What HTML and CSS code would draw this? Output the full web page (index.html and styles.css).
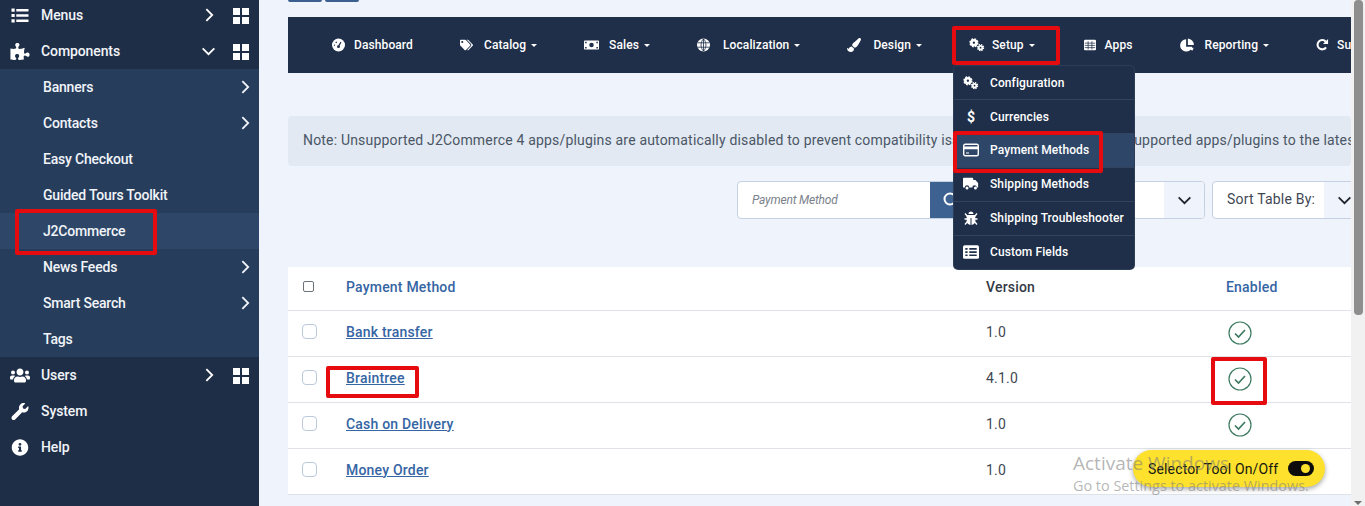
FILE: index.html
```html
<!DOCTYPE html>
<html lang="en">
<head>
    <meta charset="UTF-8">
    <meta name="viewport" content="width=device-width, initial-scale=1.0">
    <title>Payment Methods</title>
    <link rel="stylesheet" href="styles.css">
</head>
<body>
    <svg class="defs" width="0" height="0">
        <symbol id="i-grid" viewBox="0 0 16 16"><path fill="currentColor" d="M0 0h7v7H0zM9 0h7v7H9zM0 9h7v7H0zM9 9h7v7H9z"/></symbol>
        <symbol id="i-right" viewBox="0 0 10 16"><path fill="none" stroke="currentColor" stroke-width="2" d="M1.5 1.5 8 8l-6.500 6.500"/></symbol>
        <symbol id="i-down" viewBox="0 0 16 10"><path fill="none" stroke="currentColor" stroke-width="2" d="M1.500 1.500 8 8l6.500-6.500"/></symbol>
        <symbol id="i-list" viewBox="0 0 512 512"><path fill="currentColor" d="M0 48h96v96H0zM0 208h96v96H0zM0 368h96v96H0zM144 60h368v72H144zM144 220h368v72H144zM144 380h368v72H144z"/></symbol>
        <symbol id="i-puzzle" viewBox="0 0 576 512"><path fill="currentColor" d="M519.442 288.651c-41.519 0-59.5 31.593-82.058 31.593C377.409 320.244 432 144 432 144s-196.288 80-196.288-3.297c0-35.827 36.288-46.25 36.288-85.985C272 19.216 243.885 0 210.539 0c-34.654 0-66.366 18.891-66.366 56.346 0 41.364 31.711 59.277 31.711 81.75C175.885 207.719 0 166.758 0 166.758v333.237s178.635 41.047 178.635-28.662c0-22.473-40-40.107-40-81.471 0-37.456 29.25-56.346 63.577-56.346 33.673 0 61.788 19.216 61.788 54.717 0 39.735-36.288 50.158-36.288 85.985 0 60.803 129.675 25.73 181.23 25.73 0 0-34.725-120.101 25.827-120.101 35.962 0 46.423 36.152 86.308 36.152C556.712 416 576 387.99 576 354.443c0-34.199-18.962-65.792-56.558-65.792z"/></symbol>
        <symbol id="i-users" viewBox="0 0 640 512"><path fill="currentColor" d="M96 224c35.3 0 64-28.7 64-64s-28.7-64-64-64-64 28.7-64 64 28.7 64 64 64zm448 0c35.3 0 64-28.7 64-64s-28.7-64-64-64-64 28.7-64 64 28.7 64 64 64zm32 32h-64c-17.6 0-33.5 7.1-45.1 18.6 40.3 22.1 68.9 62 75.1 109.4h66c17.7 0 32-14.3 32-32v-32c0-35.3-28.7-64-64-64zm-256 0c61.9 0 112-50.1 112-112S381.9 32 320 32 208 82.1 208 144s50.1 112 112 112zm76.8 32h-8.3c-20.8 10-43.9 16-68.5 16s-47.6-6-68.5-16h-8.3C179.6 288 128 339.6 128 403.2V432c0 26.5 21.5 48 48 48h288c26.5 0 48-21.5 48-48v-28.8c0-63.6-51.6-115.2-115.2-115.2zm-223.7-13.4C161.5 263.1 145.6 256 128 256H64c-35.3 0-64 28.7-64 64v32c0 17.7 14.3 32 32 32h65.9c6.3-47.4 34.9-87.3 75.2-109.4z"/></symbol>
        <symbol id="i-wrench" viewBox="0 0 512 512"><path fill="currentColor" d="M507.73 109.1c-2.24-9.03-13.54-12.09-20.12-5.51l-74.36 74.36-67.88-11.31-11.31-67.88 74.36-74.36c6.62-6.62 3.43-17.9-5.66-20.16-47.38-11.74-99.55.91-136.58 37.93-39.64 39.64-50.55 97.1-34.05 147.2L18.74 402.76c-24.99 24.99-24.99 65.51 0 90.5 24.99 24.99 65.51 24.99 90.5 0l213.21-213.21c50.12 16.71 107.47 5.68 147.37-34.22 37.07-37.07 49.7-89.32 37.91-136.73z"/></symbol>
        <symbol id="i-info" viewBox="0 0 512 512"><path fill="currentColor" d="M256 8C119.043 8 8 119.083 8 256c0 136.997 111.043 248 248 248s248-111.003 248-248C504 119.083 392.957 8 256 8zm0 110c23.196 0 42 18.804 42 42s-18.804 42-42 42-42-18.804-42-42 18.804-42 42-42zm56 254c0 6.627-5.373 12-12 12h-88c-6.627 0-12-5.373-12-12v-24c0-6.627 5.373-12 12-12h12v-64h-12c-6.627 0-12-5.373-12-12v-24c0-6.627 5.373-12 12-12h64c6.627 0 12 5.373 12 12v100h12c6.627 0 12 5.373 12 12v24z"/></symbol>
        <symbol id="i-tacho" viewBox="0 0 16 16"><circle cx="8" cy="8" r="8" fill="currentColor"/><path fill="none" stroke="#1f2f49" stroke-width="1.500" d="M8 9.500 11 4.500"/><circle cx="8" cy="10" r="1.800" fill="#1f2f49"/><path fill="none" stroke="#1f2f49" stroke-width="1.400" stroke-dasharray="1.500 2.500" d="M3 9a5 5 0 0 1 5-5"/></symbol>
        <symbol id="i-tags" viewBox="0 0 640 512"><path fill="currentColor" d="M497.941 225.941L286.059 14.059A48 48 0 0 0 252.118 0H48C21.49 0 0 21.49 0 48v204.118a48 48 0 0 0 14.059 33.941l211.882 211.882c18.744 18.745 49.136 18.746 67.882 0l204.118-204.118c18.745-18.745 18.745-49.137 0-67.882zM112 160c-26.51 0-48-21.49-48-48s21.49-48 48-48 48 21.49 48 48-21.49 48-48 48zm513.941 133.823L421.823 497.941c-18.745 18.745-49.137 18.745-67.882 0l-.36-.36L527.64 323.522c16.999-16.999 26.36-39.6 26.36-63.64s-9.362-46.641-26.36-63.64L331.397 0h48.721a48 48 0 0 1 33.941 14.059l211.882 211.882c18.745 18.745 18.745 49.137 0 67.882z"/></symbol>
        <symbol id="i-money" viewBox="0 0 20 14"><rect y="1" width="20" height="12" rx="1" fill="currentColor"/><circle cx="10" cy="7" r="3" fill="#1f2f49"/><path fill="#1f2f49" d="M1.500 2.500h2v2h-2zM16.500 2.500h2v2h-2zM1.500 9.500h2v2h-2zM16.500 9.500h2v2h-2z"/></symbol>
        <symbol id="i-globe" viewBox="0 0 16 16"><circle cx="8" cy="8" r="8" fill="currentColor"/><path fill="none" stroke="#1f2f49" d="M.5 5.300h15M.5 10.700h15M8 .5v15M8 .5C4 4 4 12 8 15.500M8 .5c4 3.500 4 11.500 0 15"/></symbol>
        <symbol id="i-brush" viewBox="0 0 512 512"><path fill="currentColor" d="M167.02 309.34c-40.12 2.58-76.53 17.86-97.19 72.3-2.35 6.21-8 9.98-14.59 9.98-11.11 0-45.46-27.67-55.25-34.35C0 439.62 37.93 512 128 512c75.86 0 128-43.77 128-120.19 0-3.11-.65-6.08-.97-9.13l-88.01-73.34zM457.89 0c-15.16 0-29.37 6.71-40.21 16.45C213.27 199.05 192 203.34 192 257.09c0 13.7 3.25 26.76 8.73 38.7l63.82 53.18c7.21 1.8 14.64 3.03 22.39 3.03 62.11 0 98.11-45.47 211.16-256.46 7.38-14.35 13.9-29.85 13.900-45.99C512 20.64 486 0 457.89 0z"/></symbol>
        <symbol id="i-cogs" viewBox="0 0 18 15">
            <circle cx="5.500" cy="5" r="2.800" fill="none" stroke="currentColor" stroke-width="3"/>
            <circle cx="5.500" cy="5" r="4.400" fill="none" stroke="currentColor" stroke-width="1.600" stroke-dasharray="2 1.460"/>
            <circle cx="13" cy="10.500" r="2" fill="none" stroke="currentColor" stroke-width="2"/>
            <circle cx="13" cy="10.500" r="3.400" fill="none" stroke="currentColor" stroke-width="1.400" stroke-dasharray="1.600 1.070"/>
        </symbol>
        <symbol id="i-th" viewBox="0 0 16 14"><rect width="16" height="14" rx="1.500" fill="currentColor"/><path fill="none" stroke="#1f2f49" d="M1 4.500h14M1 7.500h14M1 10.500h14M5.500 2v11M10.500 2v11"/></symbol>
        <symbol id="i-pie" viewBox="0 0 16 16"><path fill="currentColor" d="M7 1.500a7 7 0 1 0 7 8.500H7zM9 .5v7.500h6.800A7.500 7.500 0 0 0 9 .5zM9.500 11l4.500 3.500a7 7 0 0 0 1.500-3.500z"/></symbol>
        <symbol id="i-redo" viewBox="0 0 14 14"><path fill="none" stroke="currentColor" stroke-width="2.200" d="M10.800 9.500A5 5 0 1 1 10.500 3.500"/><path fill="currentColor" d="M13 .5v5.500H7.500z"/></symbol>
        <symbol id="i-card" viewBox="0 0 16 14"><rect x=".7" y="1.200" width="14.600" height="11.600" rx="1.500" fill="none" stroke="currentColor" stroke-width="1.400"/><path fill="currentColor" d="M1 3.500h14v2.800H1zM3 9.500h3v1H3z"/></symbol>
        <symbol id="i-truck" viewBox="0 0 18 14"><path fill="currentColor" d="M1 0h9.500a1 1 0 0 1 1 1v1.500h2.500l3 3.500v5h-1.500a2.500 2.500 0 0 0-5 0h-3.500a2.500 2.500 0 0 0-5 0H1a1 1 0 0 1-1-1V1a1 1 0 0 1 1-1z"/><circle cx="4.500" cy="11.500" r="1.700" fill="currentColor"/><circle cx="14" cy="11.500" r="1.700" fill="currentColor"/></symbol>
        <symbol id="i-bug" viewBox="0 0 14 14"><path fill="currentColor" d="M4.500 3a2.500 2.500 0 0 1 5 0zM3.500 4h7a1 1 0 0 1 .8 1.500V11a4.300 4.300 0 0 1-3.800 3V7h-1v7a4.300 4.300 0 0 1-3.800-3V5.500A1 1 0 0 1 3.500 4z"/><path fill="none" stroke="currentColor" stroke-width="1.300" d="M1 2.500l2.500 3M13 2.500l-2.500 3M.5 8h3M13.500 8h-3M1 13.500l2.500-3M13 13.500l-2.500-3"/></symbol>
        <symbol id="i-fields" viewBox="0 0 14 12"><rect width="14" height="12" rx="1.500" fill="currentColor"/><path fill="#1f2f49" d="M2 2.500h2v1.500H2zM5.500 2.500H12v1.500H5.500zM2 5.300h2v1.500H2zM5.500 5.300H12v1.500H5.500zM2 8.100h2v1.500H2zM5.500 8.100H12v1.500H5.500z"/></symbol>
        <symbol id="i-check" viewBox="0 0 24 24"><circle cx="12" cy="12" r="11" fill="none" stroke="#3d7a60" stroke-width="1.200"/><path fill="none" stroke="#3d7a60" stroke-width="1.700" d="M7 12.500l3.500 3.500 6.500-7"/></symbol>
    </svg>

    <div class="page">
        <aside class="sidebar">
            <a class="side-item">
                <svg class="side-icon"><use href="#i-list"/></svg>
                <span class="side-label">Menus</span>
                <svg class="side-arrow"><use href="#i-right"/></svg>
                <svg class="side-grid"><use href="#i-grid"/></svg>
            </a>
            <a class="side-item">
                <svg class="side-icon"><use href="#i-puzzle"/></svg>
                <span class="side-label">Components</span>
                <svg class="side-arrow side-arrow-down"><use href="#i-down"/></svg>
                <svg class="side-grid"><use href="#i-grid"/></svg>
            </a>
            <div class="side-sub">
                <a class="sub-item">Banners<svg class="sub-arrow"><use href="#i-right"/></svg></a>
                <a class="sub-item">Contacts<svg class="sub-arrow"><use href="#i-right"/></svg></a>
                <a class="sub-item">Easy Checkout</a>
                <a class="sub-item">Guided Tours Toolkit</a>
                <a class="sub-item active">J2Commerce</a>
                <a class="sub-item">News Feeds<svg class="sub-arrow"><use href="#i-right"/></svg></a>
                <a class="sub-item">Smart Search<svg class="sub-arrow"><use href="#i-right"/></svg></a>
                <a class="sub-item">Tags</a>
            </div>
            <a class="side-item">
                <svg class="side-icon"><use href="#i-users"/></svg>
                <span class="side-label">Users</span>
                <svg class="side-arrow"><use href="#i-right"/></svg>
                <svg class="side-grid"><use href="#i-grid"/></svg>
            </a>
            <a class="side-item">
                <svg class="side-icon"><use href="#i-wrench"/></svg>
                <span class="side-label">System</span>
            </a>
            <a class="side-item">
                <svg class="side-icon"><use href="#i-info"/></svg>
                <span class="side-label">Help</span>
            </a>
        </aside>

        <main class="main">
            <div class="top-btns"><span></span><span></span></div>

            <nav class="topnav">
                <a class="nav-item"><svg class="nav-icon ni-dashboard"><use href="#i-tacho"/></svg>Dashboard</a>
                <a class="nav-item caret"><svg class="nav-icon ni-catalog"><use href="#i-tags"/></svg>Catalog</a>
                <a class="nav-item caret"><svg class="nav-icon ni-sales"><use href="#i-money"/></svg>Sales</a>
                <a class="nav-item caret"><svg class="nav-icon ni-local"><use href="#i-globe"/></svg>Localization</a>
                <a class="nav-item caret"><svg class="nav-icon ni-design"><use href="#i-brush"/></svg>Design</a>
                <a class="nav-item caret"><svg class="nav-icon ni-setup"><use href="#i-cogs"/></svg>Setup</a>
                <a class="nav-item"><svg class="nav-icon ni-apps"><use href="#i-th"/></svg>Apps</a>
                <a class="nav-item caret"><svg class="nav-icon ni-report"><use href="#i-pie"/></svg>Reporting</a>
                <a class="nav-item"><svg class="nav-icon ni-support"><use href="#i-redo"/></svg>Support</a>
            </nav>

            <div class="alert">Note: Unsupported J2Commerce 4 apps/plugins are automatically disabled to prevent compatibility issues. Please upgrade all unsupported apps/plugins to the latest version.</div>

            <div class="filters">
                <div class="search-group">
                    <div class="search-input">Payment Method</div>
                    <div class="search-btn">
                        <svg width="16" height="16" viewBox="0 0 16 16"><circle cx="7" cy="7" r="5.500" fill="none" stroke="#fff" stroke-width="2"/><path stroke="#fff" stroke-width="2" d="M11 11l4 4"/></svg>
                    </div>
                    <div class="select-fill"></div>
                    <div class="select-arrow"><svg width="15" height="9"><use href="#i-down"/></svg></div>
                </div>
                <div class="sort-select">
                    <span>Sort Table By:</span>
                    <div class="select-arrow"><svg width="15" height="9"><use href="#i-down"/></svg></div>
                </div>
            </div>

            <table class="methods">
                <thead>
                    <tr>
                        <th class="col-check"><span class="check-head"></span></th>
                        <th class="col-name">Payment Method</th>
                        <th class="col-version">Version</th>
                        <th class="col-enabled">Enabled</th>
                    </tr>
                </thead>
                <tbody>
                    <tr>
                        <td><span class="check-box"></span></td>
                        <td><a class="method-link">Bank transfer</a></td>
                        <td>1.0</td>
                        <td><svg class="ok"><use href="#i-check"/></svg></td>
                    </tr>
                    <tr>
                        <td><span class="check-box"></span></td>
                        <td><a class="method-link">Braintree</a></td>
                        <td>4.1.0</td>
                        <td><svg class="ok"><use href="#i-check"/></svg></td>
                    </tr>
                    <tr>
                        <td><span class="check-box"></span></td>
                        <td><a class="method-link">Cash on Delivery</a></td>
                        <td>1.0</td>
                        <td><svg class="ok"><use href="#i-check"/></svg></td>
                    </tr>
                    <tr>
                        <td><span class="check-box"></span></td>
                        <td><a class="method-link">Money Order</a></td>
                        <td>1.0</td>
                        <td></td>
                    </tr>
                </tbody>
            </table>

            <div class="drop-menu">
                <a class="drop-item"><svg class="drop-icon"><use href="#i-cogs"/></svg>Configuration</a>
                <a class="drop-item"><span class="drop-icon dollar">$</span>Currencies</a>
                <a class="drop-item current"><svg class="drop-icon"><use href="#i-card"/></svg>Payment Methods</a>
                <a class="drop-item"><svg class="drop-icon"><use href="#i-truck"/></svg>Shipping Methods</a>
                <a class="drop-item"><svg class="drop-icon"><use href="#i-bug"/></svg>Shipping Troubleshooter</a>
                <a class="drop-item"><svg class="drop-icon"><use href="#i-fields"/></svg>Custom Fields</a>
            </div>
        </main>

        <div class="scrollbar"><div class="scroll-thumb"></div><span class="scroll-down"></span></div>

        <!-- red markers drawn over the screenshot -->
        <span class="marker mark-j2"></span>
        <span class="marker mark-setup"></span>
        <span class="marker mark-pay"></span>
        <span class="marker mark-brain"></span>
        <span class="marker mark-check"></span>

        <div class="selector-pill">Selector Tool On/Off<span class="toggle"></span></div>
        <div class="watermark">
            <div class="wm-title">Activate Windows</div>
            <div class="wm-sub">Go to Settings to activate Windows.</div>
        </div>
    </div>
</body>
</html>
```

FILE: styles.css
```css
* {
    box-sizing: border-box;
}
body {
    margin: 0;
    font-family: Roboto, "Liberation Sans", sans-serif;
    font-size: 14px;
    background-color: #eff3fb;
    color: #3f4754;
}
.defs {
    position: absolute;
}
.page {
    position: relative;
    display: flex;
    height: 506px;
    overflow: hidden;
}

/* sidebar */
.sidebar {
    width: 259px;
    flex-shrink: 0;
    margin-top: -3px;
    height: 509px;
    background-color: #1f2e47;
    color: #fff;
    font-weight: 500;
}
.side-item {
    position: relative;
    display: flex;
    align-items: center;
    height: 36px;
}
.side-icon {
    width: 20px;
    height: 17px;
    margin-left: 10px;
    color: #fff;
}
.side-label {
    margin-left: 11px;
    color: #f1f4f8;
    letter-spacing: -0.1px;
}
.side-arrow {
    position: absolute;
    left: 205px;
    top: 10px;
    width: 9px;
    height: 16px;
}
.side-arrow-down {
    left: 201px;
    top: 14px;
    width: 15px;
    height: 9px;
}
.side-grid {
    position: absolute;
    left: 233px;
    top: 11px;
    width: 16px;
    height: 16px;
}
.side-sub {
    background-color: #263d5c;
}
.sub-item {
    position: relative;
    display: flex;
    align-items: center;
    height: 36px;
    padding-left: 43px;
    color: #f1f4f8;
    letter-spacing: -0.2px;
}
.sub-item.active {
    background-color: #2e4769;
}
.sub-arrow {
    position: absolute;
    left: 241px;
    top: 10px;
    width: 9px;
    height: 16px;
}

/* main column */
.main {
    position: relative;
    flex: 1;
    min-width: 0;
    padding-left: 29px;
    overflow: hidden;
}
.top-btns {
    display: flex;
    gap: 3px;
    height: 2px;
}
.top-btns span {
    width: 34px;
    background-color: #3b5f8f;
    border-radius: 0 0 3px 3px;
}
.topnav {
    display: flex;
    align-items: center;
    gap: 47px;
    height: 56px;
    margin-top: 15px;
    padding-left: 44px;
    background-color: #1f2f49;
    color: #fff;
    font-size: 12px;
    font-weight: 500;
    letter-spacing: 0.1px;
    white-space: nowrap;
    overflow: hidden;
}
.nav-item {
    display: flex;
    align-items: center;
    flex-shrink: 0;
}
.nav-item.caret::after {
    content: "";
    margin-left: 5px;
    border-top: 3px solid #fff;
    border-left: 3.5px solid transparent;
    border-right: 3.5px solid transparent;
}
.nav-icon {
    height: 14px;
}
.ni-dashboard { width: 13px; margin-right: 9px; }
.ni-catalog { width: 13px; margin-right: 11px; }
.ni-sales { width: 15px; margin-right: 10px; }
.ni-local { width: 13px; margin-right: 13px; }
.ni-design { width: 14px; margin-right: 12px; }
.ni-setup { width: 16px; margin-right: 7px; }
.ni-apps { width: 12px; margin-left: 2px; margin-right: 9px; }
.ni-report { width: 14px; margin-right: 11px; }
.ni-support { width: 13px; margin-right: 8px; }

.alert {
    height: 50px;
    margin-top: 43px;
    padding: 0 15px;
    line-height: 49px;
    background-color: #e2e9f2;
    border-radius: 4px;
    color: #4a5666;
    font-size: 14px;
    letter-spacing: 0.18px;
    white-space: nowrap;
    overflow: hidden;
}

.filters {
    display: flex;
    gap: 7px;
    height: 38px;
    margin-top: 15px;
    margin-left: 449px;
    width: 640px;
}
.search-group,
.sort-select {
    display: flex;
    flex-shrink: 0;
    background-color: #fff;
    border: 1px solid #c5d1e2;
    border-radius: 4px;
    overflow: hidden;
}
.search-group {
    width: 468px;
}
.search-input {
    width: 192px;
    padding-left: 14px;
    line-height: 36px;
    font-size: 12px;
    font-style: italic;
    letter-spacing: -0.2px;
    color: #7b828c;
}
.search-btn {
    display: flex;
    align-items: center;
    width: 40px;
    padding-left: 13px;
    background-color: #3d6190;
}
.select-fill {
    flex: 1;
}
.select-arrow {
    display: flex;
    align-items: center;
    justify-content: center;
    width: 40px;
    background-color: #eff3fb;
    color: #1d2430;
}
.sort-select {
    width: 153px;
    padding-left: 14px;
    line-height: 34px;
    color: #3f4754;
    justify-content: space-between;
    letter-spacing: 0.2px;
}
.sort-select .select-arrow {
    flex-shrink: 0;
}

/* table */
.methods {
    width: 100%;
    margin-top: 48px;
    border-collapse: collapse;
    table-layout: fixed;
    background-color: #fff;
    font-size: 14px;
}
.methods th {
    height: 43px;
    padding: 0 0 3px;
    text-align: left;
    font-weight: 500;
    border-bottom: 1px solid #dfe2e6;
    letter-spacing: 0.2px;
}
.methods td {
    height: 46px;
    padding: 0 0 3px;
    border-bottom: 1px solid #dfe2e6;
    letter-spacing: 0.2px;
}
.methods td:last-child {
    padding-bottom: 0;
}
.col-check { width: 58px; padding-left: 14px !important; }
.col-name { width: 640px; color: #3565a3; }
.col-version { width: 240px; color: #333a45; }
.col-enabled { color: #3565a3; }
.methods td:first-child {
    padding-left: 14px;
}
.check-head {
    display: block;
    width: 11px;
    height: 11px;
    margin-left: 1px;
    border: 1px solid #6d7278;
    border-radius: 2px;
}
.check-box {
    display: block;
    width: 15px;
    height: 15px;
    border: 1px solid #bcc9db;
    border-radius: 4px;
}
.method-link {
    color: #3565a3;
    font-weight: 500;
    text-decoration: underline;
}
.ok {
    display: block;
    width: 24px;
    height: 24px;
    margin-left: 2px;
}

/* setup dropdown */
.drop-menu {
    position: absolute;
    left: 695px;
    top: 66px;
    width: 180px;
    background-color: #1f2f49;
    border-radius: 4px;
    box-shadow: 0 0 0 1px #2d3d58;
    color: #fff;
    font-size: 12px;
    font-weight: 500;
    letter-spacing: 0.1px;
}
.drop-item {
    display: flex;
    align-items: center;
    height: 34px;
    padding-left: 9px;
    border-bottom: 1px solid #33435e;
    white-space: nowrap;
}
.drop-item:nth-child(n+3) {
    padding-bottom: 1px;
}
.drop-item:last-child {
    height: 33px;
    border-bottom: none;
}
.drop-item.current {
    background-color: #2e4769;
}
.drop-icon {
    width: 16px;
    height: 14px;
    margin-right: 11px;
    flex-shrink: 0;
}
.dollar {
    text-align: center;
    font-size: 14px;
    font-weight: 700;
    line-height: 14px;
}

/* scrollbar */
.scrollbar {
    position: relative;
    width: 14px;
    flex-shrink: 0;
    background-color: #f1f1f1;
}
.scroll-thumb {
    width: 9px;
    height: 315px;
    margin-left: 3px;
    background-color: #8e8e8e;
    border-radius: 4px;
}
.scroll-down {
    position: absolute;
    left: 3px;
    bottom: 1px;
    border-top: 4px solid #6f6f6f;
    border-left: 4px solid transparent;
    border-right: 4px solid transparent;
}

/* annotations */
.marker {
    position: absolute;
    border: 4px solid #e60b0f;
    border-radius: 2px;
}
.mark-j2 { left: 15px; top: 209px; width: 142px; height: 46px; }
.mark-setup { left: 952px; top: 26px; width: 108px; height: 39px; }
.mark-pay { left: 953px; top: 131px; width: 150px; height: 42px; }
.mark-brain { left: 326px; top: 366px; width: 93px; height: 32px; }
.mark-check { left: 1211px; top: 357px; width: 56px; height: 48px; }

.selector-pill {
    position: absolute;
    left: 1133px;
    top: 450px;
    display: flex;
    align-items: center;
    width: 192px;
    height: 37px;
    padding-left: 15px;
    background-color: #fde12d;
    border-radius: 19px;
    box-shadow: 0 2px 5px rgba(0, 0, 0, 0.35);
    color: #16160e;
    font-size: 14px;
    letter-spacing: 0.15px;
}
.toggle {
    position: relative;
    width: 26px;
    height: 15px;
    margin-left: 10px;
    background-color: #0c0c0c;
    border-radius: 8px;
}
.toggle::after {
    content: "";
    position: absolute;
    right: 4px;
    top: 3px;
    width: 9px;
    height: 9px;
    background-color: #fde12d;
    border-radius: 50%;
}
.watermark {
    position: absolute;
    left: 1073px;
    top: 450px;
    color: rgba(120, 120, 120, 0.55);
    font-family: "Open Sans", sans-serif;
}
.wm-title {
    font-size: 19px;
    line-height: 26px;
}
.wm-sub {
    font-size: 14.4px;
    line-height: 20px;
}
```
